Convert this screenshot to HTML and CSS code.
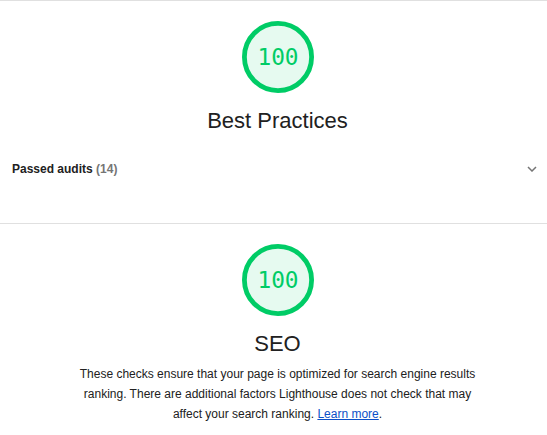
FILE: index.html
```html
<!DOCTYPE html>
<html>
<head>
<meta charset="utf-8">
<link rel="stylesheet" href="styles.css">
</head>
<body>
<div class="category">
  <div class="gauge">
    <svg class="gauge-svg" viewBox="0 0 120 120" width="72" height="72">
      <circle cx="60" cy="60" r="56" class="gauge-base"></circle>
      <text x="60" y="60" class="gauge-pct">100</text>
    </svg>
  </div>
  <div class="title">Best Practices</div>
  <div class="audits-row">
    <span class="audits-label">Passed audits <span class="count">(14)</span></span>
    <svg class="chevron" viewBox="0 0 10 6" width="10" height="6"><path d="M1 1l4 4 4-4" fill="none" stroke="#757575" stroke-width="1.5"/></svg>
  </div>
</div>
<div class="category">
  <div class="gauge">
    <svg class="gauge-svg" viewBox="0 0 120 120" width="72" height="72">
      <circle cx="60" cy="60" r="56" class="gauge-base"></circle>
      <text x="60" y="60" class="gauge-pct">100</text>
    </svg>
  </div>
  <div class="title">SEO</div>
  <p class="desc">These checks ensure that your page is optimized for search engine results ranking. There are additional factors Lighthouse does not check that may affect your search ranking. <a href="#">Learn more</a>.</p>
</div>
</body>
</html>
```
FILE: styles.css
```css
html, body {
  margin: 0;
  padding: 0;
  background: #fff;
  font-family: "Liberation Sans", Arial, sans-serif;
  color: #212121;
}
.category {
  border-top: 1px solid #e0e0e0;
  padding-top: 20px;
}
.gauge {
  display: flex;
  justify-content: center;
  padding-left: 8px;
}
.gauge-svg {
  display: block;
}
.gauge-base {
  fill: #e6faf0;
  stroke: #0c6;
  stroke-width: 8;
}
.gauge-pct {
  fill: #0c6;
  font-family: "DejaVu Sans Mono", monospace;
  font-size: 38px;
  text-anchor: middle;
  dominant-baseline: central;
}
.title {
  text-align: center;
  font-size: 22px;
  line-height: 26px;
  margin-top: 15px;
  padding-left: 8px;
}
.audits-row {
  display: flex;
  align-items: center;
  justify-content: space-between;
  padding: 0 10px 0 12px;
  margin-top: 23px;
  height: 24px;
  margin-bottom: 42px;
}
.audits-label {
  font-size: 12px;
  font-weight: bold;
}
.count {
  color: #757575;
}
.chevron {
  display: block;
}
.desc {
  max-width: 412px;
  margin: 7px auto 0;
  padding-left: 8px;
  text-align: center;
  font-size: 12px;
  line-height: 20px;
}
.desc a {
  color: #0c50c7;
}
```
